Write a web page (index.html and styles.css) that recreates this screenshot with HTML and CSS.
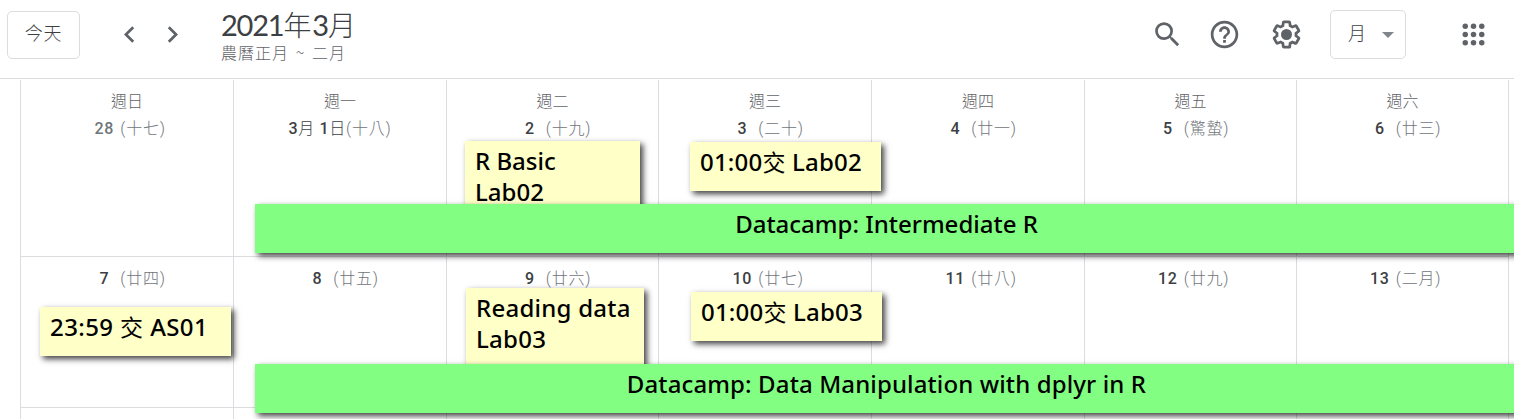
FILE: index.html
```html
<!DOCTYPE html>
<html lang="zh-Hant">
<head>
<meta charset="utf-8">
<title>2021年3月</title>
<link rel="stylesheet" href="styles.css">
</head>
<body>
<header class="topbar">
  <button class="btn today">今天</button>
  <nav class="pager">
    <svg class="icon" viewBox="0 0 24 24"><path d="M15.41 7.41L14 6l-6 6 6 6 1.41-1.41L10.83 12z"/></svg>
    <svg class="icon" viewBox="0 0 24 24"><path d="M10 6L8.59 7.41 13.17 12l-4.58 4.59L10 18l6-6z"/></svg>
  </nav>
  <div class="heading">
    <h1 class="title">2021<span class="han">年</span>3<span class="han">月</span></h1>
    <p class="subtitle">農曆正月 ~ 二月</p>
  </div>
  <div class="tools">
    <svg class="icon search" viewBox="0 0 24 24"><path d="M15.5 14h-.79l-.28-.27A6.47 6.47 0 0 0 16 9.5 6.5 6.5 0 1 0 9.5 16c1.61 0 3.09-.59 4.23-1.57l.27.28v.79l5 4.99L20.49 19l-4.99-5zm-6 0C7.01 14 5 11.99 5 9.5S7.01 5 9.5 5 14 7.01 14 9.5 11.99 14 9.5 14z"/></svg>
    <svg class="icon help" viewBox="0 0 24 24"><path d="M11 18h2v-2h-2v2zm1-16C6.48 2 2 6.48 2 12s4.48 10 10 10 10-4.48 10-10S17.52 2 12 2zm0 18c-4.41 0-8-3.59-8-8s3.59-8 8-8 8 3.59 8 8-3.59 8-8 8zm0-14c-2.21 0-4 1.79-4 4h2c0-1.1.9-2 2-2s2 .9 2 2c0 2-3 1.75-3 5h2c0-2.25 3-2.5 3-5 0-2.21-1.79-4-4-4z"/></svg>
    <svg class="icon gear" viewBox="0 0 24 24"><path d="M13.85 22.25h-3.7c-.74 0-1.36-.54-1.45-1.27l-.27-1.89c-.27-.14-.53-.29-.79-.46l-1.8.72c-.7.26-1.47-.03-1.81-.65L2.2 15.53c-.35-.66-.2-1.44.36-1.88l1.53-1.19c-.01-.15-.02-.3-.02-.46 0-.15.01-.31.02-.46l-1.52-1.19c-.59-.45-.74-1.26-.37-1.88l1.85-3.19c.34-.62 1.11-.9 1.79-.63l1.81.73c.26-.17.52-.32.78-.46l.27-1.91c.09-.7.71-1.25 1.44-1.25h3.7c.74 0 1.36.54 1.45 1.27l.27 1.89c.27.14.53.29.79.46l1.8-.72c.71-.26 1.48.03 1.82.65l1.84 3.18c.36.66.2 1.44-.36 1.88l-1.52 1.19c.01.15.02.3.02.46s-.01.31-.02.46l1.52 1.19c.56.45.72 1.23.37 1.86l-1.86 3.22c-.34.62-1.11.9-1.8.63l-1.8-.72c-.26.17-.52.32-.78.46l-.27 1.91c-.1.68-.72 1.22-1.46 1.22zm-3.23-2h2.76l.37-2.55.53-.22c.44-.18.88-.44 1.34-.78l.45-.34 2.38.96 1.38-2.4-2.03-1.58.07-.56c.03-.26.06-.51.06-.78s-.03-.53-.06-.78l-.07-.56 2.03-1.58-1.39-2.4-2.39.96-.45-.35c-.42-.32-.87-.58-1.33-.77l-.52-.22-.37-2.55h-2.76l-.37 2.55-.53.21c-.44.19-.88.44-1.34.79l-.45.33-2.38-.95-1.39 2.39 2.03 1.58-.07.56a7 7 0 0 0-.06.79c0 .26.02.53.06.78l.07.56-2.03 1.58 1.38 2.4 2.39-.96.45.35c.43.33.86.58 1.33.77l.53.22.38 2.55z"/><circle cx="12" cy="12" r="4"/></svg>
    <button class="btn view"><span>月</span><svg class="caret" viewBox="0 0 12 6"><path d="M0 0h12L6 6z"/></svg></button>
    <svg class="icon apps" viewBox="0 0 24 24"><circle cx="6" cy="6" r="2"/><circle cx="12" cy="6" r="2"/><circle cx="18" cy="6" r="2"/><circle cx="6" cy="12" r="2"/><circle cx="12" cy="12" r="2"/><circle cx="18" cy="12" r="2"/><circle cx="6" cy="18" r="2"/><circle cx="12" cy="18" r="2"/><circle cx="18" cy="18" r="2"/></svg>
  </div>
</header>
<main class="calendar">
  <section class="week first">
    <div class="day"><div class="weekday">週日</div><div class="date"><span class="num muted">28</span><span class="lunar">(十七)</span></div></div>
    <div class="day"><div class="weekday">週一</div><div class="date"><span class="num wide">3<span class="han">月</span> 1<span class="han">日</span></span><span class="lunar">(十八)</span></div></div>
    <div class="day"><div class="weekday">週二</div><div class="date"><span class="num">2</span><span class="lunar">(十九)</span></div></div>
    <div class="day"><div class="weekday">週三</div><div class="date"><span class="num">3</span><span class="lunar">(二十)</span></div></div>
    <div class="day"><div class="weekday">週四</div><div class="date"><span class="num">4</span><span class="lunar">(廿一)</span></div></div>
    <div class="day"><div class="weekday">週五</div><div class="date"><span class="num">5</span><span class="lunar">(驚蟄)</span></div></div>
    <div class="day"><div class="weekday">週六</div><div class="date"><span class="num">6</span><span class="lunar">(廿三)</span></div></div>
  </section>
  <section class="week second">
    <div class="day"><div class="date"><span class="num">7</span><span class="lunar">(廿四)</span></div></div>
    <div class="day"><div class="date"><span class="num">8</span><span class="lunar">(廿五)</span></div></div>
    <div class="day"><div class="date"><span class="num">9</span><span class="lunar">(廿六)</span></div></div>
    <div class="day"><div class="date"><span class="num">10</span><span class="lunar">(廿七)</span></div></div>
    <div class="day"><div class="date"><span class="num">11</span><span class="lunar">(廿八)</span></div></div>
    <div class="day"><div class="date"><span class="num">12</span><span class="lunar">(廿九)</span></div></div>
    <div class="day"><div class="date"><span class="num">13</span><span class="lunar">(二月)</span></div></div>
  </section>
  <section class="week third">
    <div class="day"></div><div class="day"></div><div class="day"></div><div class="day"></div><div class="day"></div><div class="day"></div><div class="day"></div>
  </section>
</main>
<div class="note basic">R Basic<br>Lab02</div>
<div class="note lab02">01:00<span class="han">交</span> Lab02</div>
<div class="note as01">23:59 <span class="han">交</span> AS01</div>
<div class="note reading">Reading data<br>Lab03</div>
<div class="note lab03">01:00<span class="han">交</span> Lab03</div>
<div class="note course intermediate"><span>Datacamp: Intermediate R</span></div>
<div class="note course dplyr"><span>Datacamp: Data Manipulation with dplyr in R</span></div>
</body>
</html>
```
FILE: styles.css
```css
* { box-sizing: border-box; }
body {
  position: relative;
  margin: 0;
  width: 1514px;
  height: 419px;
  overflow: hidden;
  background: #fff;
  color: #3c4043;
  font-family: Roboto, "Noto Sans CJK TC", sans-serif;
}
.topbar {
  display: flex;
  align-items: flex-start;
  height: 79px;
  padding: 10px 24px 0 7px;
  border-bottom: 1px solid #dadce0;
}
.btn {
  border: 1px solid #dadce0;
  border-radius: 5px;
  background: #fff;
  color: #3c4043;
  padding: 0;
  font: 300 18px/24px "Noto Sans CJK TC", sans-serif;
}
.today { width: 73px; height: 48px; margin-top: 1px; padding-bottom: 6px; letter-spacing: .8px; }
.icon { display: block; width: 33px; height: 33px; fill: #5f6368; flex: none; }
.pager { display: flex; gap: 10px; margin: 8px 0 0 32.5px; }
.heading { margin-left: 32.5px; }
.title {
  margin: 0;
  height: 33px;
  font: 400 29px/30px Lato, sans-serif;
  letter-spacing: -1.2px;
  white-space: nowrap;
}
.title .han { font: 300 28px/1 "Noto Sans CJK TC", sans-serif; letter-spacing: .8px; }
.subtitle {
  margin: 0;
  font: 300 16px/19px "Noto Sans CJK TC", sans-serif;
  color: #5f6368;
  letter-spacing: 1px;
  word-spacing: 2.2px;
  white-space: nowrap;
}
.tools { display: flex; align-items: flex-start; margin-left: auto; }
.tools .icon { margin-top: 8px; }
.search { margin-right: 24px; }
.help { margin-right: 29px; }
.gear { margin-right: 27px; }
.view {
  display: flex;
  align-items: center;
  justify-content: space-between;
  width: 76px;
  height: 49px;
  padding: 0 11px 0 17px;
}
.view span { padding-bottom: 6px; }
.caret { width: 12px; height: 6px; fill: #80868b; }
.tools .apps { margin-left: 51px; margin-right: 0; }
.calendar { margin-left: 20px; padding-top: 1px; width: 1489px; }
.week {
  display: grid;
  grid-template-columns: 213px 213px 212px 213px 213px 212px 213px;
  border-top: 1px solid #dadce0;
}
.day { border-left: 1px solid #dadce0; }
.day:last-child { border-right: 1px solid #dadce0; }
.first { height: 176px; border-top: 0; }
.first .day { padding-top: 9px; }
.second { height: 151px; }
.second .day { padding-top: 11px; }
.third { height: 20px; }
.weekday {
  height: 29px;
  font: 300 16px/22px "Noto Sans CJK TC", sans-serif;
  color: #5f6368;
  text-align: center;
}
.date { display: flex; justify-content: center; height: 22px; line-height: 22px; font-size: 16px; padding-left: 4px; }
.num { width: 24px; margin-right: 4px; text-align: center; font-weight: 500; letter-spacing: .6px; }
.num.muted { color: #70757a; }
.num.wide { width: auto; margin: 0 0 0 -4px; white-space: nowrap; }
.num .han { font-weight: 300; letter-spacing: .8px; }
.lunar { font-weight: 300; color: #70757a; letter-spacing: .8px; }
.note {
  position: absolute;
  padding: 4px 10px;
  background: #ffffc8;
  color: #000;
  font: 500 24px/31px "Noto Sans", "Open Sans", sans-serif;
  white-space: nowrap;
  box-shadow: 3px 3px 6px rgba(0, 0, 0, .75);
}
.note .han { font-family: "Noto Sans CJK TC", sans-serif; font-size: 23px; font-weight: 400; line-height: 1; }
.basic { left: 465px; top: 141px; width: 175px; height: 80px; }
.lab02 { left: 690px; top: 142px; width: 191px; height: 49px; letter-spacing: .2px; }
.as01 { left: 40px; top: 307px; width: 191px; height: 49px; letter-spacing: .4px; }
.reading { left: 466px; top: 288px; width: 178px; height: 80px; letter-spacing: .25px; }
.lab03 { left: 691px; top: 292px; width: 191px; height: 49px; letter-spacing: .2px; }
.course { left: 255px; width: 1263px; height: 49px; background: #82ff82; text-align: center; }
.intermediate { top: 204px; }
.dplyr { top: 364px; letter-spacing: .12px; }
```
